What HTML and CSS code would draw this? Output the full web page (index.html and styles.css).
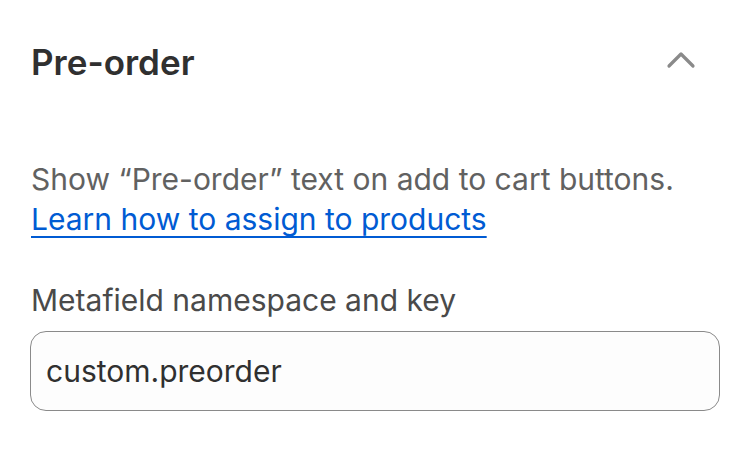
FILE: index.html
```html
<!DOCTYPE html>
<html lang="en">
<head>
<meta charset="utf-8">
<title>Pre-order</title>
<link rel="stylesheet" href="styles.css">
</head>
<body>
<section class="panel">
  <header class="panel-header">
    <h2 class="panel-title">Pre-order</h2>
    <button class="toggle" type="button" aria-label="Collapse">
      <svg width="40" height="40" viewBox="0 0 40 40" aria-hidden="true">
        <polyline points="8,24 20,12 32,24" fill="none" stroke="#8a8a8a" stroke-width="3.2" stroke-linecap="round" stroke-linejoin="round"/>
      </svg>
    </button>
  </header>
  <p class="description">Show “Pre-order” text on add to cart buttons.<br><a class="link" href="#">Learn how to assign to products</a></p>
  <label class="field">
    <span class="field-label">Metafield namespace and key</span>
    <input class="field-input" type="text" value="custom.preorder">
  </label>
</section>
</body>
</html>
```

FILE: styles.css
```css
* { box-sizing: border-box; }
html, body { margin: 0; padding: 0; background: #ffffff; }
body {
  font-family: Inter, "Noto Sans", "Liberation Sans", sans-serif;
  color: #303030;
}
.panel {
  width: 750px;
  padding: 42px 30px 0 30px;
  display: flex;
  flex-direction: column;
}
.panel-header {
  display: flex;
  align-items: center;
  justify-content: space-between;
  height: 40px;
  padding-left: 1px;
  padding-right: 19px;
}
.panel-title {
  margin: 0;
  font-size: 35px;
  line-height: 40px;
  font-weight: 600;
  color: #303030;
}
.toggle {
  border: 0;
  background: none;
  padding: 0;
  width: 40px;
  height: 40px;
  display: block;
}
.toggle svg { display: block; }
.description {
  margin: 77px 0 0 0;
  padding-left: 1px;
  font-size: 30px;
  line-height: 40px;
  color: #616161;
}
.link {
  color: #005bd3;
  text-decoration: underline;
  text-decoration-thickness: 2px;
  text-underline-offset: 6px;
}
.field {
  display: flex;
  flex-direction: column;
  margin-top: 41px;
  gap: 11px;
}
.field-label {
  padding-left: 1px;
  font-size: 30px;
  line-height: 40px;
  color: #4a4a4a;
}
.field-input {
  width: 690px;
  height: 80px;
  padding: 0 15px;
  border: 1.5px solid #8a8a8a;
  border-radius: 16px;
  background: #fdfdfd;
  font-family: Inter, "Noto Sans", "Liberation Sans", sans-serif;
  font-size: 30px;
  line-height: 40px;
  color: #303030;
  outline: none;
}
```
